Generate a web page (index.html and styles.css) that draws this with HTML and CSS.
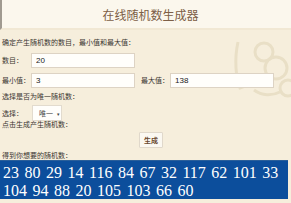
FILE: index.html
```html
<!DOCTYPE html>
<html lang="zh">
<head>
    <meta charset="UTF-8">
    <title>在线随机数生成器</title>
    <link rel="stylesheet" href="styles.css">
</head>
<body>

<div class="page">
    <div class="header">
        <h1 class="title">在线随机数生成器</h1>
    </div>

    <svg class="deco" width="70" height="70" viewBox="0 0 70 70">
        <g fill="none" stroke="#e9dfc6" stroke-width="3">
            <path d="M12 12 C8 30 10 48 14 58 C22 56 30 50 34 44"/>
            <circle cx="38" cy="22" r="9"/>
            <circle cx="50" cy="38" r="11"/>
            <circle cx="62" cy="58" r="8"/>
            <path d="M28 60 C36 66 46 66 54 62"/>
        </g>
    </svg>

    <div class="content">
        <div class="line">确定产生随机数的数目，最小值和最大值：</div>

        <div class="row">
            <span class="label">数目：</span>
            <input class="field" type="text" value="20">
        </div>

        <div class="row">
            <span class="label">最小值：</span>
            <input class="field" type="text" value="3">
            <span class="label label-max">最大值：</span>
            <input class="field" type="text" value="138">
        </div>

        <div class="line">选择是否为唯一随机数：</div>

        <div class="row row-select">
            <span class="label">选择：</span>
            <span class="select">唯一 <span class="arrow">▾</span></span>
        </div>

        <div class="line">点击生成产生随机数：</div>

        <div class="button-container">
            <button class="gen-button">生成</button>
        </div>

        <div class="line">得到你想要的随机数：</div>
    </div>

    <div class="result">23 80 29 14 116 84 67 32 117 62 101 33 104 94 88 20 105 103 66 60</div>
</div>

</body>
</html>
```

FILE: styles.css
```css
body {
    margin: 0;
    background: #f6eedc;
    font-family: "Noto Sans CJK SC", "Liberation Sans", sans-serif;
    color: #3a3530;
}

.page {
    position: relative;
    width: 291px;
    height: 203px;
    overflow: hidden;
}

.header {
    height: 28px;
    background: #fbf7ed;
    border-left: 2px solid #a09a90;
    border-bottom: 2px solid #f1e8d4;
    text-align: center;
}

.title {
    margin: 0;
    padding-left: 8px;
    font-size: 12px;
    font-weight: normal;
    line-height: 29px;
    color: #7d5f46;
}

.deco {
    position: absolute;
    left: 226px;
    top: 30px;
}

.content {
    position: relative;
    padding: 8px 0 0 2px;
}

.line {
    font-size: 7px;
    line-height: 9px;
    height: 9px;
}

.row {
    display: flex;
    align-items: center;
    height: 15px;
    margin-top: 6px;
    margin-bottom: -1px;
}

.row + .row {
    margin-top: 6px;
}

.row + .line {
    margin-top: 5px;
}

.label {
    width: 29px;
    font-size: 7px;
    line-height: 9px;
    white-space: nowrap;
}

.label-max {
    margin-left: 6px;
}

.field {
    box-sizing: border-box;
    width: 104px;
    height: 15px;
    margin: 0;
    padding: 0 0 0 4px;
    border: 1px solid #ddd3c4;
    background: #fffefb;
    font-family: "Liberation Sans", sans-serif;
    font-size: 8px;
    color: #222;
    outline: none;
}

.row.row-select {
    height: 16px;
    margin-top: 4px;
}

.select {
    box-sizing: border-box;
    display: inline-flex;
    align-items: center;
    width: 30px;
    height: 16px;
    margin-left: 1px;
    padding-left: 6px;
    border: 1px solid #e2dbce;
    background: #fffefb;
    font-size: 7px;
    color: #444;
}

.arrow {
    margin-left: 4px;
    font-size: 5px;
}

.row.row-select + .line {
    margin-top: 0;
}

.button-container {
    display: flex;
    height: 16px;
    margin: 3px 0;
    padding-left: 137px;
}

.gen-button {
    box-sizing: border-box;
    width: 24px;
    height: 16px;
    margin: 0;
    padding: 0;
    border: 1px solid #e0d8cb;
    border-radius: 1px;
    background: #fbf8f1;
    font-family: "Noto Sans CJK SC", sans-serif;
    font-size: 7px;
    font-weight: bold;
    color: #6b4a32;
}

.result {
    position: relative;
    box-sizing: border-box;
    width: 288px;
    height: 39px;
    margin-top: 0;
    padding: 3px 0 0 3px;
    background: #0c4e9c;
    border-top: 1px solid #2a5f9a;
    font-family: "Liberation Serif", serif;
    font-size: 16px;
    line-height: 18px;
    color: #ffffff;
    word-spacing: 1.5px;
}
```
